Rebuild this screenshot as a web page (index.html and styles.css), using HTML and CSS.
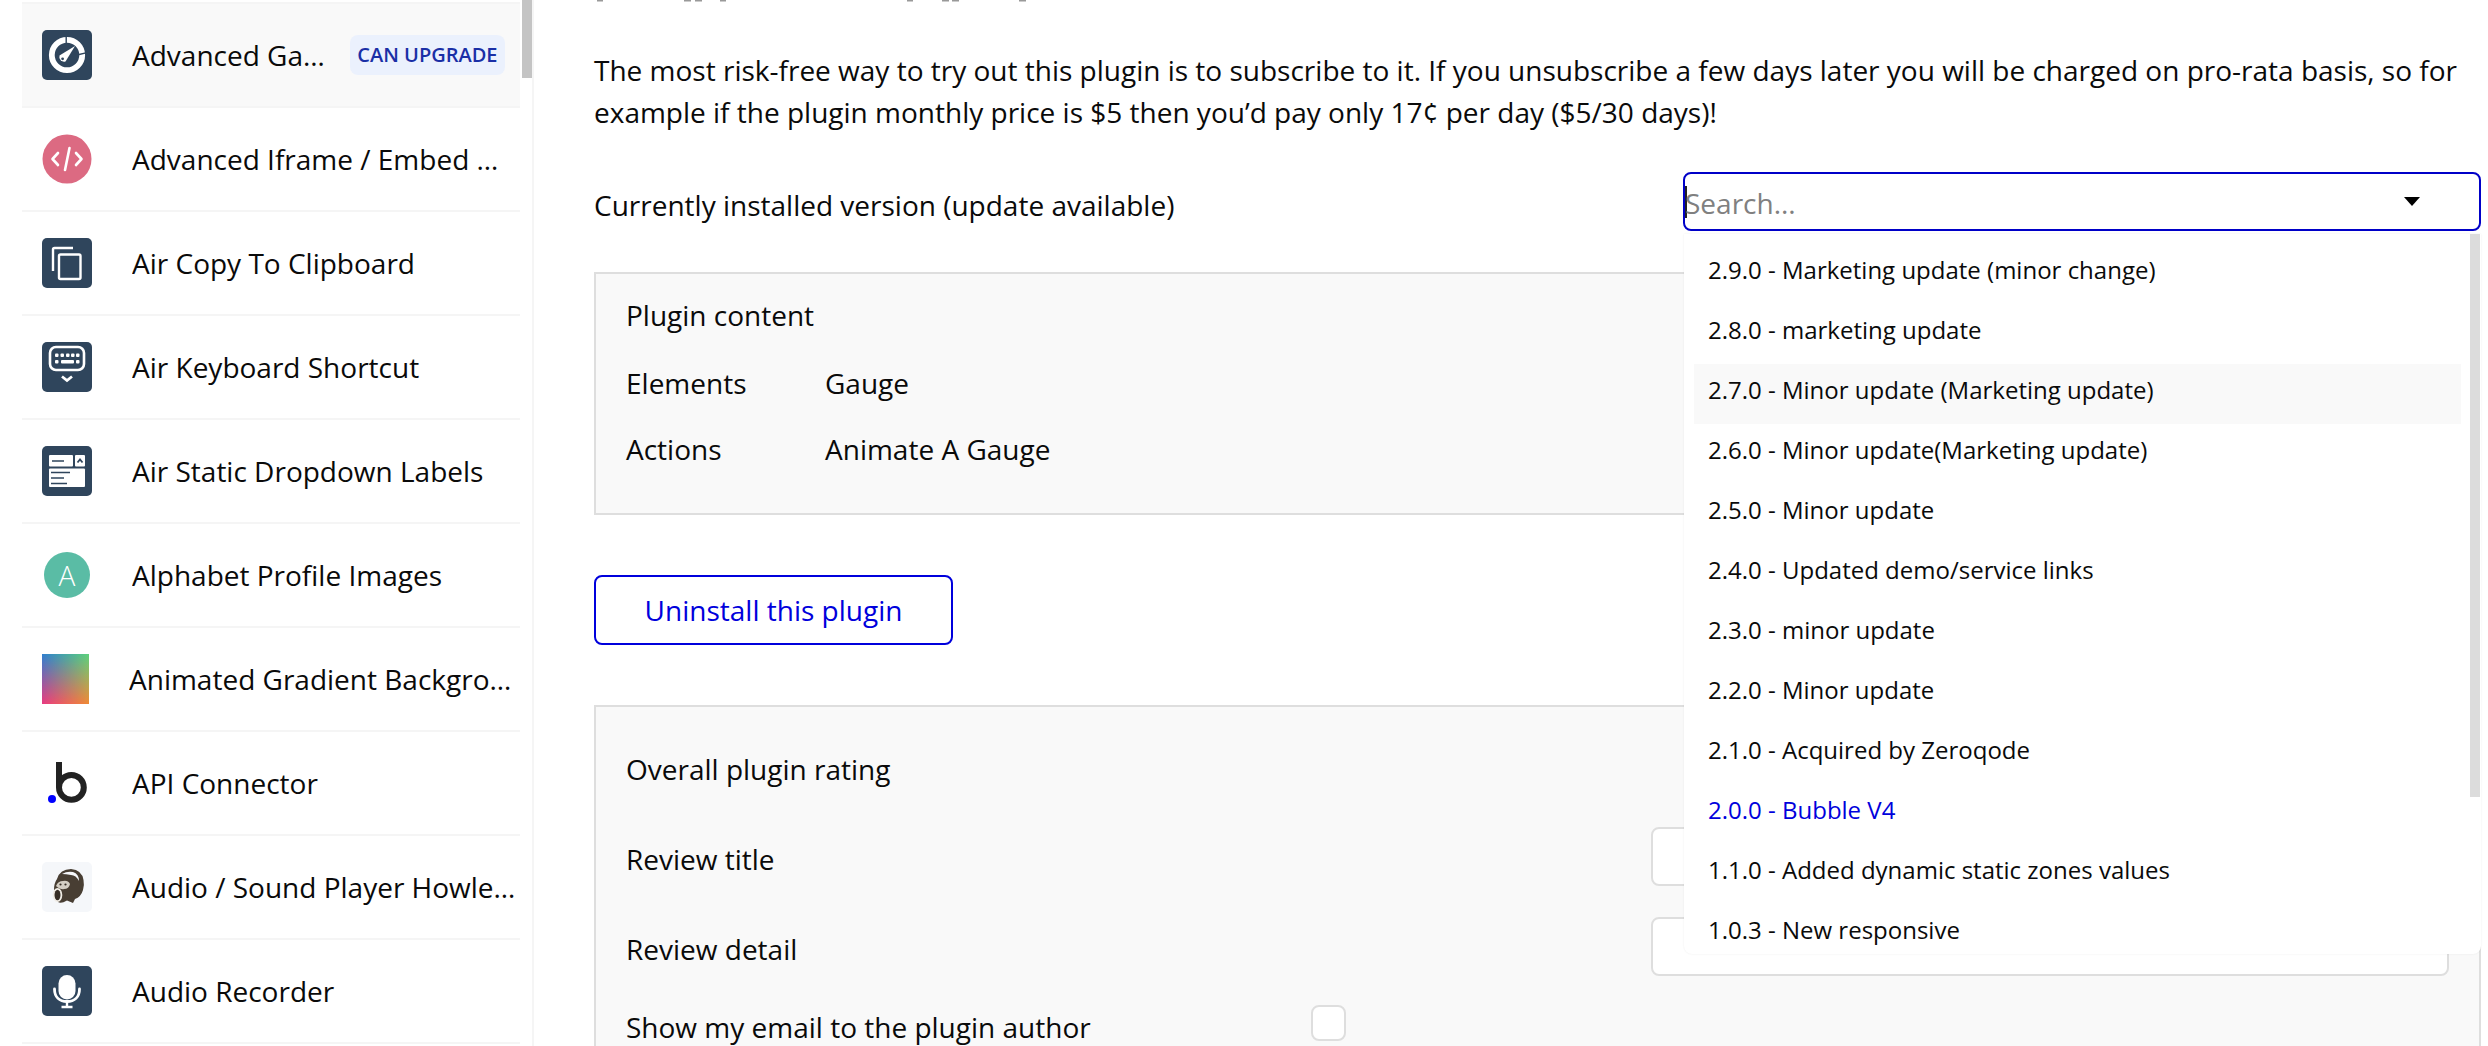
FILE: index.html
```html
<!DOCTYPE html>
<html lang="en">
<head>
<meta charset="utf-8">
<title>Plugins</title>
<link rel="stylesheet" href="styles.css">
</head>
<body>
<div class="app">
  <aside class="sidebar">
    <div class="thumb"></div>
    <ul class="plugin-list">
      <li class="plugin active">
        <svg class="icon" viewBox="0 0 50 50"><rect class="tile" width="50" height="50" rx="5"/><circle cx="25" cy="25" r="15.2" fill="none" stroke="#fff" stroke-width="5.800"/><path d="M24.200 6v7M37 24.500l7-1.600" stroke="#2f455c" stroke-width="1.400"/><path d="M33 16 23.500 31.500a4.800 4.800 0 0 1-6-6z" fill="#fff"/><circle cx="20.600" cy="28.800" r="1.400" fill="#2f455c"/></svg>
        <span class="name">Advanced Gauge</span><span class="badge">CAN UPGRADE</span>
      </li>
      <li class="plugin">
        <svg class="icon" viewBox="0 0 50 50"><circle cx="25" cy="25" r="24.500" fill="#dc6a82"/><path d="M16 19l-5.500 6 5.500 6M34 19l5.500 6-5.500 6M27.500 14l-4.500 22" fill="none" stroke="#fff" stroke-width="2.600" stroke-linecap="round" stroke-linejoin="round"/></svg>
        <span class="name">Advanced Iframe / Embed Website</span>
      </li>
      <li class="plugin">
        <svg class="icon" viewBox="0 0 50 50"><rect class="tile" width="50" height="50" rx="5"/><path d="M31 10H12.500a1.500 1.500 0 0 0-1.500 1.500V33" fill="none" stroke="#fff" stroke-width="2.400"/><rect x="17" y="16.500" width="21.500" height="24.500" rx="1.500" fill="none" stroke="#fff" stroke-width="2.400"/></svg>
        <span class="name">Air Copy To Clipboard</span>
      </li>
      <li class="plugin">
        <svg class="icon" viewBox="0 0 50 50"><rect class="tile" width="50" height="50" rx="5"/><rect x="8" y="5" width="34" height="23" rx="6" fill="none" stroke="#fff" stroke-width="2.600"/><g fill="#fff"><rect x="13" y="11.500" width="3.500" height="3.500" rx="1"/><rect x="18.500" y="11.500" width="3.500" height="3.500" rx="1"/><rect x="24" y="11.500" width="3.500" height="3.500" rx="1"/><rect x="29" y="11.500" width="3.500" height="3.500" rx="1"/><rect x="34" y="11.500" width="3.500" height="3.500" rx="1"/><rect x="13" y="18" width="3.500" height="3.500" rx="1"/><rect x="19" y="18" width="13" height="3.500" rx="1"/><rect x="34" y="18" width="3.500" height="3.500" rx="1"/></g><path d="M20 34.500l5 4 5-4" fill="none" stroke="#fff" stroke-width="2.800"/></svg>
        <span class="name">Air Keyboard Shortcut</span>
      </li>
      <li class="plugin">
        <svg class="icon" viewBox="0 0 50 50"><rect class="tile" width="50" height="50" rx="5"/><g fill="#fff"><rect x="7" y="9" width="24" height="11.500" rx="1"/><rect x="33" y="9" width="10" height="11.500" rx="1"/><rect x="7" y="22.500" width="36" height="18.500" rx="1"/></g><path d="M10 15h12M9 26.500h19M9 32h13M9 37.500h16" stroke="#2f455c" stroke-width="1.700"/><path d="M35.500 16.500l2.500-3 2.500 3" fill="none" stroke="#2f455c" stroke-width="1.800"/></svg>
        <span class="name">Air Static Dropdown Labels</span>
      </li>
      <li class="plugin">
        <span class="avatar">A</span>
        <span class="name">Alphabet Profile Images</span>
      </li>
      <li class="plugin">
        <span class="gradient"></span>
        <span class="name">Animated Gradient Background</span>
      </li>
      <li class="plugin">
        <svg class="icon" viewBox="0 0 50 50"><path d="M17 4v25.400" fill="none" stroke="#222" stroke-width="6"/><circle cx="29.400" cy="29.400" r="12.400" fill="none" stroke="#222" stroke-width="6"/><circle cx="10" cy="41" r="4" fill="#00f"/></svg>
        <span class="name">API Connector</span>
      </li>
      <li class="plugin">
        <svg class="icon" viewBox="0 0 50 50"><rect width="50" height="50" rx="5" fill="#f5f7fa"/><path d="M15 17q3-10 14-10 11 1 12.500 11 1 5-.5 10-2 7-8 9l-2 4-6-2.500q-6 3.500-9 1.500-4-6-4-12 0-7 3-11z" fill="#483e33"/><path d="M20 12q5-3 11-2 6 2 6 9-3-6-8-6-5-1-9-1z" fill="#f5f7fa"/><path d="M14 24q2-5 7-5 5-1 7 3-1 5-6 5-3 1-8-3z" fill="#d4cec4"/><circle cx="18.500" cy="22.500" r="1.100" fill="#362e26"/><circle cx="23.500" cy="22.500" r="1.100" fill="#362e26"/><ellipse cx="15.500" cy="33" rx="4.800" ry="7" fill="#f1ede6"/><ellipse cx="15.500" cy="33" rx="3" ry="5.200" fill="#362e26"/></svg>
        <span class="name">Audio / Sound Player Howler JS</span>
      </li>
      <li class="plugin">
        <svg class="icon" viewBox="0 0 50 50"><rect class="tile" width="50" height="50" rx="5"/><rect x="16.500" y="9" width="17" height="24.500" rx="8.500" fill="#fff"/><path d="M12.500 23c0 8 5 12.500 12.500 12.500S37.500 31 37.500 23" fill="none" stroke="#fff" stroke-width="2.800" stroke-linecap="round"/><path d="M25 35v6M19.500 41h11" stroke="#fff" stroke-width="2.400"/></svg>
        <span class="name">Audio Recorder</span>
      </li>
    </ul>
  </aside>

  <main class="main">
    <svg class="clipped-heading" viewBox="0 0 1887 3" aria-hidden="true"><path d="M3 0h6v1.500H3zM90 0h7v1.500h-7zM101 0h7v1.500h-7zM126 0h6v1.500h-6zM313 0h6v1.500h-6zM348 0h7v1.500h-7zM358 0h7v1.500h-7zM425 0h7v1.500h-7z" fill="#999"/></svg>
    <p class="intro">The most risk-free way to try out this plugin is to subscribe to it. If you unsubscribe a few days later you will be charged on pro-rata basis, so for example if the plugin monthly price is $5 then you’d pay only 17¢ per day ($5/30 days)!</p>

    <div class="version-row">
      <span class="version-label">Currently installed version (update available)</span>
      <div class="select">
        <div class="select-box">
          <span class="caret"></span><span class="placeholder">Search...</span>
          <svg class="arrow" viewBox="0 0 16 9"><path d="M0 0h16L8 9z"/></svg>
        </div>
        <div class="dropdown">
          <div class="dropdown-thumb"></div>
          <ul class="options">
            <li class="option">2.9.0 - Marketing update (minor change)</li>
            <li class="option">2.8.0 - marketing update</li>
            <li class="option hover">2.7.0 - Minor update (Marketing update)</li>
            <li class="option">2.6.0 - Minor update(Marketing update)</li>
            <li class="option">2.5.0 - Minor update</li>
            <li class="option">2.4.0 - Updated demo/service links</li>
            <li class="option">2.3.0 - minor update</li>
            <li class="option">2.2.0 - Minor update</li>
            <li class="option">2.1.0 - Acquired by Zeroqode</li>
            <li class="option current">2.0.0 - Bubble V4</li>
            <li class="option">1.1.0 - Added dynamic static zones values</li>
            <li class="option">1.0.3 - New responsive</li>
          </ul>
        </div>
      </div>
    </div>

    <section class="panel content-panel">
      <div class="content-title">Plugin content</div>
      <div class="content-row"><span class="content-key">Elements</span><span>Gauge</span></div>
      <div class="content-row"><span class="content-key">Actions</span><span>Animate A Gauge</span></div>
    </section>

    <button class="uninstall" type="button">Uninstall this plugin</button>

    <section class="panel review-panel">
      <div class="rating-row">Overall plugin rating</div>
      <div class="field-row"><span class="field-label">Review title</span><div class="field"></div></div>
      <div class="field-row"><span class="field-label">Review detail</span><div class="field"></div></div>
      <div class="check-row"><span class="check-label">Show my email to the plugin author</span><span class="checkbox"></span></div>
    </section>
  </main>
</div>
</body>
</html>
```

FILE: styles.css
```css
* { box-sizing: border-box; }
html, body { margin: 0; height: 100%; overflow: hidden; background: #fff; }
body { font-family: "Open Sans", "Noto Sans", sans-serif; font-size: 28px; line-height: 42px; color: #0a0a0a; }
ul { list-style: none; margin: 0; padding: 0; }
.app { display: flex; height: 1046px; overflow: hidden; }

.sidebar { position: relative; flex: 0 0 534px; height: 100%; padding: 2px 12px 0 22px; border-right: 2px solid #f5f5f5; overflow: hidden; }
.thumb { position: absolute; top: 0; right: 0; width: 10px; height: 78px; background: #c4c4c4; }
.plugin { display: flex; align-items: center; height: 104px; padding-left: 20px; border-bottom: 2px solid #f5f5f5; }
.plugin:first-child { height: 106px; border-top: 2px solid #f5f5f5; }
.plugin.active { background: #f9f9f9; }
.icon { flex: 0 0 50px; width: 50px; height: 50px; margin-right: 40px; display: block; }
.tile { fill: #2f455c; }
.avatar { flex: 0 0 46px; height: 46px; margin: 0 42px 0 2px; border-radius: 50%; background: #5abca5; color: #fff; font-size: 28px; font-weight: 300; line-height: 46px; text-align: center; }
.gradient { position: relative; flex: 0 0 47px; height: 50px; margin-right: 40px; background: linear-gradient(to right, #2f80d0, #5dd27c); }
.gradient::after { content: ""; position: absolute; inset: 0; background: linear-gradient(to right, #ea3a80, #f08a34); -webkit-mask-image: linear-gradient(to bottom, transparent, #000); mask-image: linear-gradient(to bottom, transparent, #000); }
.name { flex: 1 1 0; min-width: 0; padding-right: 3px; white-space: nowrap; overflow: hidden; text-overflow: ellipsis; }
.active .name { padding-right: 14px; }
.badge { flex: none; margin-right: 15px; height: 40px; padding: 0 7.500px; border-radius: 8px; background: #ebf1fd; color: #1a2fa6; font-size: 20px; font-weight: 600; line-height: 40px; white-space: nowrap; }

.main { flex: 1; min-width: 0; padding: 0 7px 0 60px; }
.clipped-heading { display: block; width: 1887px; height: 3px; }
.intro { margin: 46px 0 0; height: 84px; }
.version-row { display: flex; justify-content: space-between; margin-top: 39px; }
.version-label { padding-top: 12px; }
.select { position: relative; width: 798px; }
.select-box { display: flex; align-items: center; height: 59px; border: 2px solid #0000c8; border-radius: 8px; background: #fff; }
.caret { width: 2px; height: 32px; background: #222; margin-right: -2px; }
.placeholder { flex: 1; padding-top: 2px; color: #808080; }
.arrow { width: 16px; height: 9px; margin-right: 59px; }
.dropdown { position: absolute; z-index: 2; left: 1px; right: 0; top: 62px; height: 720px; padding: 10px 20px 0 10px; overflow: hidden; background: #fff; border-radius: 0 0 8px 8px; box-shadow: 0 0 2px rgba(0,0,0,.08); }
.dropdown-thumb { position: absolute; top: 0; right: 1px; width: 10px; height: 563px; background: #dcdcdc; }
.option { height: 60px; padding-left: 14px; font-size: 24px; line-height: 51px; }
.option.hover { background: #f9f9f9; }
.option.current { color: #0000dc; }

.panel { background: #f9f9f9; border: 2px solid #dedede; padding: 0 30px; }
.content-panel { margin-top: 41px; height: 243px; padding-top: 20px; }
.content-title { margin-bottom: 26px; }
.content-row { display: flex; margin-bottom: 24px; }
.content-key { flex: 0 0 199px; }
.uninstall { display: block; margin-top: 60px; width: 359px; height: 70px; padding: 0; background: #fff; border: 2px solid #0000dc; border-radius: 8px; color: #0000dc; font: inherit; line-height: 64px; }
.review-panel { margin-top: 60px; height: 400px; padding-top: 41px; }
.rating-row { height: 79px; }
.field-row { display: flex; justify-content: space-between; height: 59px; margin-bottom: 31px; }
.field-label { padding-top: 11px; }
.field { width: 798px; height: 59px; background: #fff; border: 2px solid #dedede; border-radius: 8px; }
.check-row { display: flex; margin-top: -2px; }
.check-label { flex: 0 0 685px; padding-top: 1px; }
.checkbox { width: 35px; height: 36px; background: #fff; border: 2px solid #dedede; border-radius: 8px; }
```
